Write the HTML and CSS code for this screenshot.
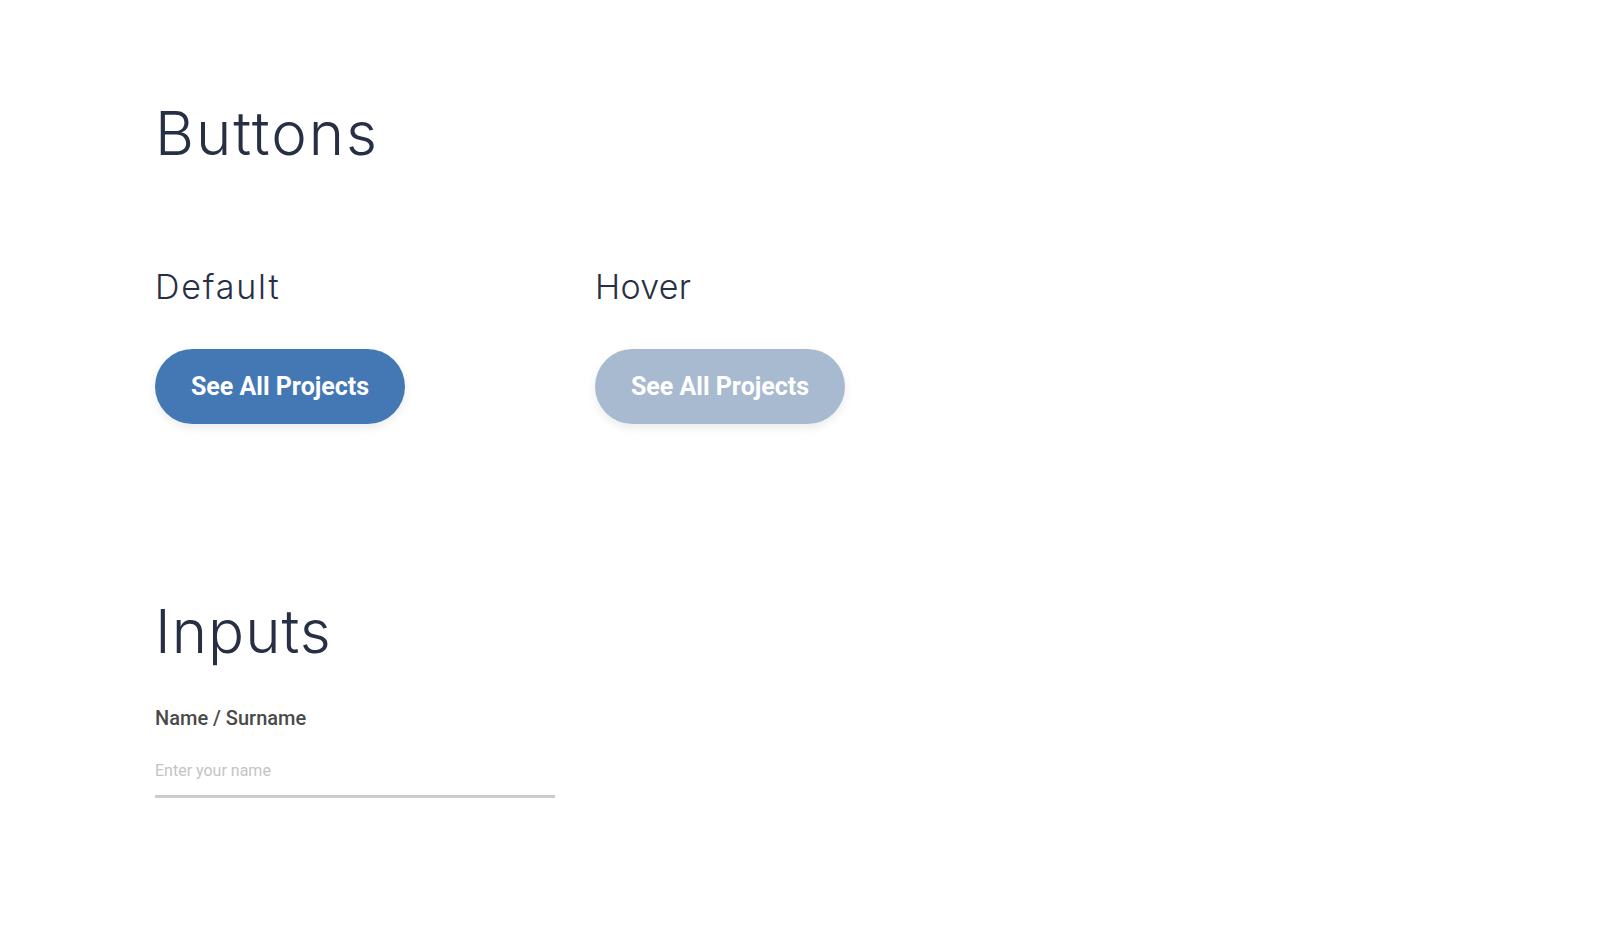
FILE: index.html
```html
<!DOCTYPE html>
<html lang="en">
<head>
<meta charset="utf-8">
<title>UI Kit</title>
<link rel="stylesheet" href="styles.css">
</head>
<body>
<main class="page">
  <section class="section buttons">
    <h1 class="section-title">Buttons</h1>
    <div class="states">
      <div class="state">
        <h2 class="state-title">Default</h2>
        <button class="btn">See All Projects</button>
      </div>
      <div class="state">
        <h2 class="state-title state-title-tight">Hover</h2>
        <button class="btn btn-hover">See All Projects</button>
      </div>
    </div>
  </section>
  <section class="section inputs">
    <h1 class="section-title section-title-tight">Inputs</h1>
    <label class="field">
      <span class="field-label">Name / Surname</span>
      <input class="field-input" type="text" placeholder="Enter your name">
    </label>
  </section>
</main>
</body>
</html>
```
FILE: styles.css
```css
* { box-sizing: border-box; }
html, body { margin: 0; padding: 0; background: #fff; }
body { font-family: Inter, "Noto Sans", sans-serif; color: #272f45; }
.page { padding: 97px 0 0 155px; }
.section-title {
  margin: 0;
  font-family: Inter, sans-serif;
  font-weight: 300;
  font-size: 60px;
  line-height: 72px;
  letter-spacing: 2px;
  color: #272f45;
}
.section-title-tight { letter-spacing: 1px; }
.states { display: flex; margin-top: 98px; }
.state { width: 440px; display: flex; flex-direction: column; align-items: flex-start; }
.state-title {
  margin: 0;
  font-family: Inter, sans-serif;
  font-weight: 300;
  font-size: 34px;
  line-height: 40px;
  letter-spacing: 1.8px;
  color: #272f45;
}
.state-title-tight { letter-spacing: 0.3px; }
.btn {
  margin-top: 42px;
  height: 75px;
  width: 250px;
  border: none;
  border-radius: 38px;
  background: #4378b5;
  color: #fff;
  font-family: Roboto, sans-serif;
  font-weight: 700;
  font-size: 25px;
  box-shadow: 0 4px 10px rgba(0,0,0,0.08);
  cursor: pointer;
}
.btn-hover { background: #a8bacf; }
.inputs { margin-top: 171px; }
.field { display: flex; flex-direction: column; width: 400px; margin-top: 39px; }
.field-label {
  font-family: Roboto, sans-serif;
  font-weight: 500;
  font-size: 20px;
  color: #4a4a4a;
}
.field-input {
  margin-top: 31px;
  border: none;
  border-bottom: 3px solid #cccccc;
  padding: 0 0 15px 0;
  font-family: Roboto, sans-serif;
  font-size: 16px;
  outline: none;
}
.field-input::placeholder { color: #c4c4c4; }
```
